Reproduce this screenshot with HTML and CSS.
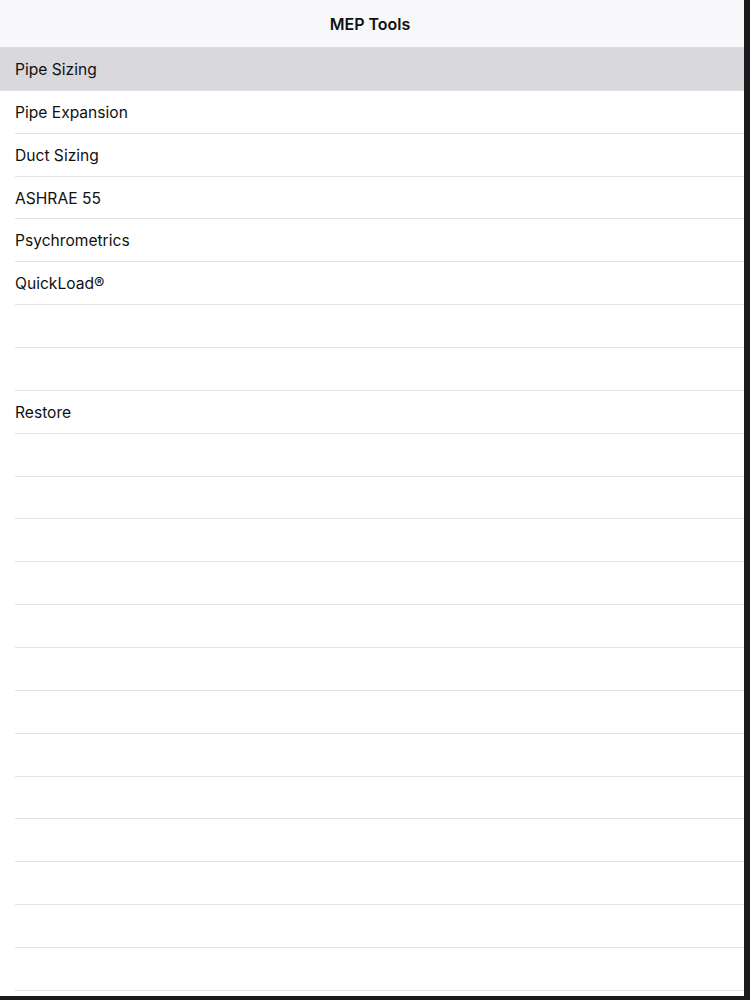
FILE: index.html
```html
<!DOCTYPE html>
<html lang="en">
<head>
    <meta charset="UTF-8">
    <title>MEP Tools</title>
    <link rel="stylesheet" href="styles.css">
</head>
<body>
    <div class="frame">
        <div class="screen">
            <!-- Navigation bar -->
            <header class="navbar">
                <h1>MEP Tools</h1>
            </header>

            <!-- Tool list -->
            <ul class="tools">
                <li class="selected">Pipe Sizing</li>
                <li>Pipe Expansion</li>
                <li>Duct Sizing</li>
                <li>ASHRAE 55</li>
                <li>Psychrometrics</li>
                <li>QuickLoad&reg;</li>
                <li></li>
                <li></li>
                <li>Restore</li>
                <li></li>
                <li></li>
                <li></li>
                <li></li>
                <li></li>
                <li></li>
                <li></li>
                <li></li>
                <li></li>
                <li></li>
                <li></li>
                <li></li>
                <li></li>
                <li></li>
            </ul>
        </div>
        <div class="edge"></div>
    </div>
    <div class="bottom-edge"></div>
</body>
</html>
```

FILE: styles.css
```css
body {
    font-family: Inter, "Noto Sans", sans-serif;
    margin: 0;
    padding: 0;
    height: 1000px;
    display: flex;
    flex-direction: column;
    background-color: #1b1b1b;
    overflow: hidden;
}

.frame {
    flex: 1;
    display: flex;
    min-height: 0;
}

.screen {
    flex: 1;
    background-color: #fff;
    overflow: hidden;
}

.edge {
    width: 6px;
    background-color: #1b1b1b;
}

.bottom-edge {
    height: 4px;
    background-color: #1b1b1b;
}

/* Navigation bar */
.navbar {
    height: 47px;
    padding-right: 4px;
    background-color: #f8f7f9;
    border-bottom: 1px solid #dcdbde;
    display: flex;
    align-items: center;
    justify-content: center;
}

.navbar h1 {
    margin: 0;
    font-size: 16px;
    font-weight: 600;
    color: #111;
}

/* List */
.tools {
    list-style-type: none;
    margin: 0;
    padding: 0;
}

.tools li {
    height: 42.86px;
    box-sizing: border-box;
    padding-left: 15px;
    display: flex;
    align-items: center;
    font-size: 15.6px;
    color: #111;
    position: relative;
}

.tools li::after {
    content: "";
    position: absolute;
    left: 15px;
    right: 0;
    bottom: 0;
    height: 1px;
    background-color: #e2e1e4;
}

.tools li.selected {
    background-color: #d9d8dc;
}

.tools li.selected::after {
    left: 0;
}
```
